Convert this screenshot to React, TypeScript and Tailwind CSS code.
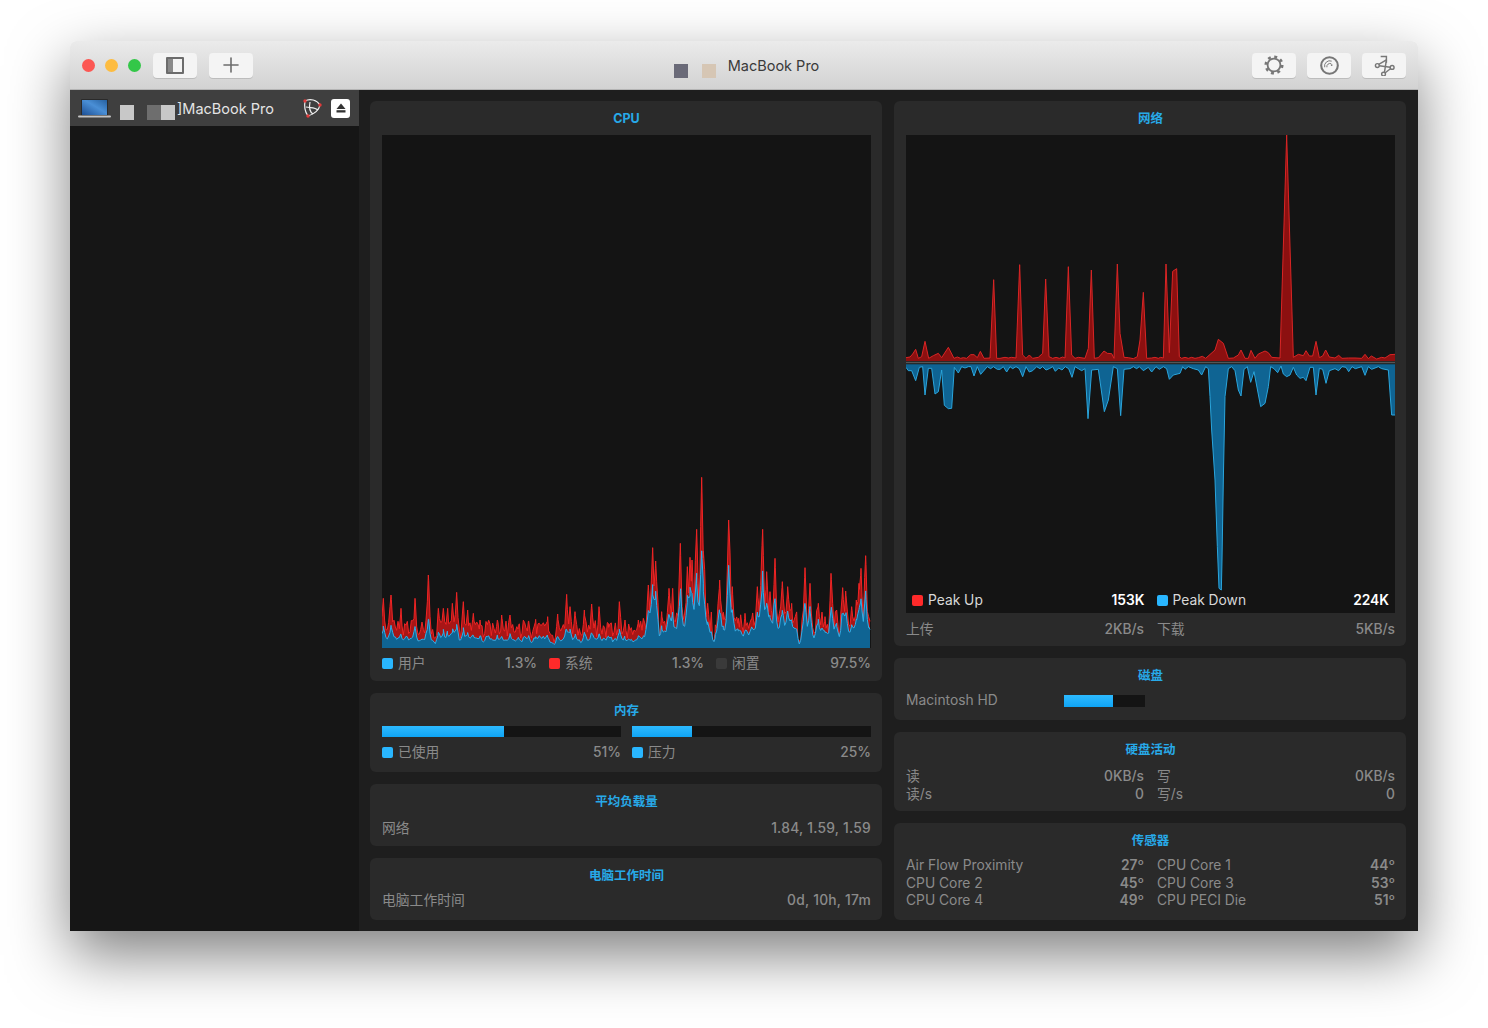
import type { ReactNode } from "react";
import { Plus } from "lucide-react";

const FONT = "font-['Inter','Noto_Sans_CJK_SC',sans-serif]";

// points below are taken from the reference, zoomed 3x
const netUp = [
  [18, 683], [30, 681], [38, 672], [47, 658], [55, 685], [65, 680], [75, 634], [86, 685], [100, 677], [115, 670],
  [125, 683], [145, 652], [162, 685], [172, 681], [182, 685], [190, 683], [200, 685], [212, 674], [222, 674], [232, 683],
  [241, 664], [252, 685], [270, 684], [281, 449], [290, 685], [300, 685], [315, 682], [325, 684], [335, 682], [348, 684],
  [359, 404], [368, 675], [378, 685], [388, 675], [398, 685], [415, 682], [428, 670], [437, 447], [447, 680], [458, 685],
  [468, 682], [478, 685], [488, 681], [495, 684], [505, 410], [515, 675], [525, 685], [535, 682], [555, 685], [565, 655],
  [574, 420], [583, 685], [595, 683], [612, 663], [622, 670], [635, 671], [642, 685], [652, 402], [660, 610], [672, 682],
  [685, 683], [700, 686], [712, 680], [720, 630], [730, 487], [740, 685], [755, 684], [765, 682], [775, 685], [782, 682],
  [790, 684], [798, 402], [808, 668], [818, 424], [830, 416], [838, 680], [845, 685], [855, 682], [865, 685], [875, 682],
  [885, 685], [895, 683], [907, 679], [917, 685], [945, 660], [955, 628], [970, 640], [985, 685], [1000, 684], [1015, 675],
  [1023, 660], [1035, 685], [1045, 685], [1053, 661], [1065, 685], [1075, 672], [1095, 663], [1105, 668], [1115, 682], [1140, 684],
  [1160, 15], [1180, 682], [1195, 673], [1210, 677], [1218, 662], [1228, 678], [1238, 678], [1248, 634], [1258, 683], [1268, 678],
  [1277, 660], [1288, 681], [1305, 684], [1316, 676], [1326, 685], [1345, 684], [1365, 684], [1385, 685], [1395, 673], [1405, 686],
  [1414, 678], [1430, 687], [1445, 682], [1455, 684], [1470, 674], [1485, 673],
];

const netDown = [
  [18, 712], [25, 722], [35, 722], [47, 752], [58, 712], [68, 710], [75, 795], [85, 715], [95, 715], [105, 792],
  [115, 785], [125, 720], [133, 826], [145, 836], [155, 835], [163, 712], [175, 729], [185, 710], [195, 714], [205, 710],
  [213, 710], [222, 738], [232, 710], [242, 733], [262, 710], [272, 716], [280, 710], [292, 718], [300, 718], [310, 710],
  [320, 726], [330, 710], [338, 716], [348, 710], [358, 716], [368, 740], [378, 710], [388, 726], [398, 722], [410, 710],
  [420, 716], [428, 710], [438, 720], [448, 716], [458, 710], [466, 724], [476, 714], [486, 720], [496, 710], [506, 716],
  [516, 742], [525, 710], [535, 716], [545, 722], [555, 716], [564, 866], [575, 720], [595, 718], [613, 845], [625, 810],
  [640, 710], [652, 716], [662, 857], [672, 718], [690, 716], [700, 710], [710, 716], [718, 710], [730, 722], [745, 712],
  [755, 726], [768, 710], [778, 718], [790, 710], [800, 716], [808, 748], [820, 735], [840, 730], [848, 710], [855, 718],
  [865, 710], [880, 716], [895, 720], [905, 735], [917, 710], [925, 716], [930, 800], [935, 900], [945, 1050], [952, 1250],
  [957, 1375], [964, 1380], [966, 1290], [970, 1050], [975, 800], [985, 716], [995, 710], [1005, 722], [1015, 780], [1023, 798],
  [1032, 718], [1042, 710], [1052, 757], [1062, 725], [1082, 830], [1095, 820], [1105, 770], [1112, 710], [1122, 716], [1133, 728],
  [1143, 708], [1150, 732], [1160, 740], [1170, 735], [1180, 712], [1190, 735], [1200, 745], [1210, 742], [1218, 752], [1230, 712],
  [1240, 712], [1248, 795], [1258, 715], [1268, 718], [1278, 760], [1288, 722], [1305, 716], [1316, 722], [1326, 710], [1338, 712],
  [1346, 725], [1356, 710], [1366, 716], [1385, 710], [1395, 736], [1405, 710], [1415, 718], [1435, 710], [1445, 716], [1465, 720],
  [1475, 855], [1485, 855],
];

const cpuPeaks = [
  [25, 415], [48, 405], [78, 445], [120, 415], [160, 345], [190, 445], [205, 445], [218, 445], [232, 430], [245, 397],
  [265, 425], [278, 450], [295, 460], [315, 480], [333, 485], [367, 480], [380, 465], [405, 465], [430, 497], [460, 485],
  [482, 478], [518, 470], [548, 462], [575, 403], [585, 440], [600, 455], [628, 450], [650, 432], [672, 440], [700, 490],
  [733, 425], [750, 480], [790, 480], [805, 475], [820, 375], [833, 263], [842, 303], [860, 455], [882, 385], [893, 385],
  [916, 250], [937, 320], [945, 292], [951, 300], [965, 208], [980, 52], [985, 293], [998, 430], [1020, 520], [1034, 360],
  [1045, 485], [1061, 180], [1072, 380], [1090, 475], [1110, 460], [1130, 490], [1147, 380], [1163, 208], [1175, 335], [1185, 395],
  [1200, 295], [1222, 365], [1238, 380], [1250, 430], [1272, 540], [1290, 323], [1305, 370], [1330, 430], [1350, 470], [1368, 340],
  [1385, 450], [1403, 383], [1412, 393], [1430, 440], [1444, 420], [1452, 370], [1458, 325], [1472, 287], [1481, 470],
];

const cpuDips = [540, 855, 1015, 1180, 1272, 1395];

function makeCpu() {
  let seed = 17;
  const rand = () => {
    seed = (seed * 16807) % 2147483647;
    return seed / 2147483647;
  };
  const xs: number[] = cpuPeaks.map((p) => p[0]);
  for (let x = 21; x <= 1487; x += 4) xs.push(x);
  xs.sort((a, b) => a - b);

  const red: number[][] = xs.map((x) => {
    const late = x > 810;
    let y = (late ? 450 : 480) + rand() * (late ? 70 : 55);
    if (cpuDips.some((d) => Math.abs(d - x) < 6)) y = 548;
    const spread = 0.7 + rand() * 0.7;
    for (const p of cpuPeaks) {
      const k = 5 + (565 - p[1]) / 14;
      y = Math.min(y, p[1] + Math.abs(p[0] - x) * k * spread);
    }
    return [x, y];
  });

  // the blue series follows the red one, a little smoothed
  const blue = red.map((p, i) => {
    const prev = red[Math.max(i - 1, 0)][1];
    const next = red[Math.min(i + 1, red.length - 1)][1];
    const smooth = (prev + p[1] * 2 + next) / 4;
    const ratio = (p[0] > 810 ? 0.58 : 0.38) + rand() * 0.14;
    return [p[0], 565 - (565 - smooth) * ratio];
  });
  return { red, blue };
}

const cpu = makeCpu();

function area(points: number[][], base: number) {
  const first = points[0];
  const last = points[points.length - 1];
  return `M${first[0]} ${base} ` + points.map((p) => `L${p[0]} ${p[1]}`).join(" ") + ` L${last[0]} ${base} Z`;
}

function line(points: number[][]) {
  return "M" + points.map((p) => `${p[0]} ${p[1]}`).join(" L");
}

function Card({ title, className, children }: { title: string; className?: string; children: ReactNode }) {
  return (
    <section className={`rounded-[6px] bg-[#2a2a2a] pl-3 pr-[11px] ${className ?? ""}`}>
      <h2 className="pt-[10px] text-center text-[12.5px] font-bold leading-[15px] text-[#27a9e8]">{title}</h2>
      {children}
    </section>
  );
}

function Pair({ label, value, bold, wide }: { label: string; value: string; bold?: boolean; wide?: boolean }) {
  return (
    <div className="flex items-center justify-between text-[13.8px] leading-[17.5px] text-[#8a8a8a]">
      <span>{label}</span>
      <span className={`${bold ? "font-semibold" : "font-medium"} ${wide ? "tracking-[0.25px]" : ""}`}>{value}</span>
    </div>
  );
}

function Legend({ color, label, value }: { color: string; label: string; value: string }) {
  return (
    <div className="flex items-center text-[13.8px] leading-[18px] text-[#8a8a8a]">
      <span className={`mr-[5px] h-[11px] w-[11px] rounded-[2px] ${color}`} />
      <span>{label}</span>
      <span className="ml-auto font-medium">{value}</span>
    </div>
  );
}

function Bar({ percent, className }: { percent: number; className?: string }) {
  return (
    <div className={`bg-[#141414] ${className ?? "h-[11px]"}`}>
      <div className="h-full bg-gradient-to-b from-[#2cbaff] to-[#0ea4f4]" style={{ width: `${percent}%` }} />
    </div>
  );
}

function ToolButton({ children }: { children: ReactNode }) {
  return (
    <button className="flex h-[25px] w-[44px] items-center justify-center rounded-[4px] bg-[#f4f4f4] shadow-[0_1px_0_rgba(0,0,0,0.12)]">
      {children}
    </button>
  );
}

function CpuChart() {
  return (
    <svg viewBox="21 -975 1467 1539" className="block h-[513px] w-[489px] bg-[#141414]">
      <path d={area(cpu.red, 565)} fill="#a81616" />
      <path d={line(cpu.red)} fill="none" stroke="#ee2424" strokeWidth="3" />
      <path d={area(cpu.blue, 565)} fill="#0f6493" />
      <path d={line(cpu.blue)} fill="none" stroke="#2db0ea" strokeWidth="3" />
    </svg>
  );
}

function NetChart() {
  return (
    <svg viewBox="18 15 1467 1434" className="block h-[478px] w-[489px]">
      <path d={area(netUp, 693)} fill="#8c1010" />
      <path d={line(netUp)} fill="none" stroke="#d92525" strokeWidth="3" />
      <rect x="18" y="695" width="1467" height="5" fill="#555555" />
      <path d={area(netDown, 703)} fill="#0f6493" />
      <path d={line(netDown)} fill="none" stroke="#2aa5dc" strokeWidth="3" />
    </svg>
  );
}

function Laptop() {
  return (
    <svg viewBox="0 0 33 20" className="h-[20px] w-[33px]">
      <defs>
        <linearGradient id="screen" x1="0" y1="1" x2="1" y2="0">
          <stop offset="0" stopColor="#1d4f94" />
          <stop offset="0.55" stopColor="#4a8fd6" />
          <stop offset="1" stopColor="#26609f" />
        </linearGradient>
      </defs>
      <rect x="3" y="1" width="27" height="17" rx="1" fill="#2a2a2a" />
      <rect x="4" y="2" width="25" height="15" fill="url(#screen)" />
      <rect x="0" y="17.5" width="33" height="2" rx="1" fill="#c4c4c4" />
    </svg>
  );
}

function KnotIcon() {
  return (
    <svg viewBox="0 0 20 20" className="h-[20px] w-[20px]" fill="none" stroke="#f0f0f0" strokeWidth="1.2">
      <path d="M3 3C8 0 15 2 18 7" />
      <path d="M3 3C2 9 3 14 6 18" />
      <path d="M18 7C17 12 12 16 6 18" />
      <path d="M8 4C7 9 8 14 11 16" />
      <path d="M4 9C9 10 13 9 16 12" />
      <circle cx="3" cy="3" r="1.7" fill="#e23b3b" stroke="none" />
      <circle cx="18" cy="7" r="1.7" fill="#e23b3b" stroke="none" />
      <circle cx="6" cy="18" r="1.7" fill="#e23b3b" stroke="none" />
    </svg>
  );
}

function EjectButton() {
  return (
    <div className="flex h-[19px] w-[19px] items-center justify-center rounded-[3px] bg-white">
      <svg viewBox="0 0 10 10" className="h-[10px] w-[10px]" fill="#333">
        <path d="M5 0.5 9.5 6H0.5Z" />
        <rect x="0.5" y="7.2" width="9" height="2.3" />
      </svg>
    </div>
  );
}

function GearIcon() {
  return (
    <svg viewBox="0 0 24 24" className="h-[22px] w-[22px]" fill="none" stroke="#777777">
      <circle cx="12" cy="12" r="7" strokeWidth="2" />
      <circle cx="12" cy="12" r="9" strokeWidth="2.8" strokeDasharray="3.2 3.87" />
    </svg>
  );
}

function SpiralIcon() {
  return (
    <svg viewBox="0 0 24 24" className="h-[21px] w-[21px]" fill="none" stroke="#777777">
      <circle cx="12" cy="12" r="9.5" strokeWidth="2.4" />
      <path d="M6.5 14a6 6 0 0 1 8-7" strokeWidth="1.1" />
      <path d="M9 14a3.6 3.6 0 0 1 5-4" strokeWidth="1.1" />
      <circle cx="14.5" cy="11.5" r="1" fill="#777777" stroke="none" />
    </svg>
  );
}

function RouteIcon() {
  return (
    <svg viewBox="0 0 22 22" className="h-[21px] w-[21px]" fill="none" stroke="#777777" strokeWidth="1.5">
      <circle cx="3.5" cy="11" r="2" />
      <circle cx="19" cy="13" r="2" />
      <circle cx="10" cy="20" r="2" />
      <path d="M5 9.8 13 5" />
      <path d="M7 1.5H13V8" />
      <path d="M5.5 11.3 17 12.8" />
      <path d="M11 18 13 5" />
      <path d="M11.5 18.8 17.5 14.2" />
    </svg>
  );
}

export default function App() {
  return (
    <div className={`h-[1028px] overflow-hidden bg-white px-[70px] pt-[41px] ${FONT}`}>
      <div className="flex h-[890px] w-[1348px] flex-col rounded-t-[6px] shadow-[0_24px_60px_rgba(0,0,0,0.5)]">
        {/* Title bar */}
        <header className="grid h-[49px] grid-cols-[1fr_auto_1fr] items-center rounded-t-[6px] border-b border-[#b4b4b4] bg-gradient-to-b from-[#ebebeb] to-[#d2d2d2] pl-[12px] pr-[12px]">
          <div className="flex items-center">
            <span className="h-[13px] w-[13px] rounded-full bg-[#fc5753]" />
            <span className="ml-[10px] h-[13px] w-[13px] rounded-full bg-[#fdbc40]" />
            <span className="ml-[10px] h-[13px] w-[13px] rounded-full bg-[#33c748]" />
            <div className="ml-[12px] flex gap-3">
              <ToolButton>
                <span className="flex h-[17px] w-[18px] rounded-[1px] border-2 border-[#6c6c6c]">
                  <span className="h-full w-[5px] bg-[#8a8a8a]" />
                </span>
              </ToolButton>
              <ToolButton>
                <Plus size={24} strokeWidth={1.6} color="#6c6c6c" />
              </ToolButton>
            </div>
          </div>
          <div className="ml-[5px] flex items-center text-[14.5px] text-[#3a3a3a]">
            <span className="mt-[12px] h-[14px] w-[14px] bg-[#6a6a78]" />
            <span className="ml-[14px] mt-[12px] h-[14px] w-[14px] bg-[#d6c6b4]" />
            <span className="ml-[12px] mt-[2px]">MacBook Pro</span>
          </div>
          <div className="flex justify-end gap-[11px]">
            <ToolButton>
              <GearIcon />
            </ToolButton>
            <ToolButton>
              <SpiralIcon />
            </ToolButton>
            <ToolButton>
              <RouteIcon />
            </ToolButton>
          </div>
        </header>

        <div className="flex min-h-0 flex-1">
          {/* Sidebar */}
          <aside className="w-[289px] bg-[#161616]">
            <div className="flex h-[36px] items-center bg-[#3f3f3f] pl-[8px] pr-[9px] text-[14.5px] text-[#e4e4e4]">
              <Laptop />
              <span className="ml-[9px] mt-[8px] h-[15px] w-[14px] bg-[#c8c8c8]" />
              <span className="ml-[13px] mt-[8px] h-[15px] w-[14px] bg-[#6e6e6e]" />
              <span className="mt-[8px] h-[15px] w-[14px] bg-[#c8c8c8]" />
              <span className="ml-[2px] mt-[2px]">]MacBook Pro</span>
              <div className="ml-auto flex items-center gap-[9px]">
                <KnotIcon />
                <EjectButton />
              </div>
            </div>
          </aside>

          {/* Panels */}
          <main className="flex flex-1 gap-3 bg-[#1e1e1e] p-[11px]">
            <div className="flex w-[512px] flex-col gap-3">
              <Card title="CPU" className="h-[580px]">
                <div className="mt-[9px]">
                  <CpuChart />
                </div>
                <div className="mt-[6px] grid grid-cols-3 gap-3">
                  <Legend color="bg-[#29b6ff]" label="用户" value="1.3%" />
                  <Legend color="bg-[#ff2a2a]" label="系统" value="1.3%" />
                  <Legend color="bg-[#3a3a3a]" label="闲置" value="97.5%" />
                </div>
              </Card>
              <Card title="内存" className="h-[79px]">
                <div className="mt-[8px] grid grid-cols-2 gap-[11px]">
                  <div>
                    <Bar percent={51} />
                    <div className="mt-[6px]">
                      <Legend color="bg-[#29b6ff]" label="已使用" value="51%" />
                    </div>
                  </div>
                  <div>
                    <Bar percent={25} />
                    <div className="mt-[6px]">
                      <Legend color="bg-[#29b6ff]" label="压力" value="25%" />
                    </div>
                  </div>
                </div>
              </Card>
              <Card title="平均负载量" className="h-[62px]">
                <div className="mt-[11px]">
                  <Pair label="网络" value="1.84, 1.59, 1.59" wide />
                </div>
              </Card>
              <Card title="电脑工作时间" className="h-[62px]">
                <div className="mt-[9px]">
                  <Pair label="电脑工作时间" value="0d, 10h, 17m" wide />
                </div>
              </Card>
            </div>

            <div className="flex w-[512px] flex-col gap-3">
              <Card title="网络" className="h-[545px]">
                <div className="relative mt-[9px] h-[478px] bg-[#141414]">
                  <NetChart />
                  <div className="absolute inset-x-[6px] bottom-[4px] grid grid-cols-2 gap-[12px] text-[13.8px] leading-[18px] text-[#d8d8d8]">
                    <div className="flex items-center">
                      <span className="mr-[5px] h-[11px] w-[11px] rounded-[2px] bg-[#ff2a2a]" />
                      <span>Peak Up</span>
                      <span className="ml-auto font-semibold text-white">153K</span>
                    </div>
                    <div className="flex items-center">
                      <span className="mr-[5px] h-[11px] w-[11px] rounded-[2px] bg-[#29b6ff]" />
                      <span>Peak Down</span>
                      <span className="ml-auto font-semibold text-white">224K</span>
                    </div>
                  </div>
                </div>
                <div className="mt-[8px] grid grid-cols-2 gap-[13px]">
                  <Pair label="上传" value="2KB/s" />
                  <Pair label="下载" value="5KB/s" />
                </div>
              </Card>
              <Card title="磁盘" className="h-[62px]">
                <div className="mt-[9px] flex items-center text-[13.8px] leading-[17.5px] text-[#8a8a8a]">
                  <span className="w-[158px]">Macintosh HD</span>
                  <div className="w-[81px]">
                    <Bar percent={60} className="h-[12px]" />
                  </div>
                </div>
              </Card>
              <Card title="硬盘活动" className="h-[79px]">
                <div className="mt-[11px] grid grid-cols-2 gap-x-[13px]">
                  <Pair label="读" value="0KB/s" />
                  <Pair label="写" value="0KB/s" />
                  <Pair label="读/s" value="0" />
                  <Pair label="写/s" value="0" />
                </div>
              </Card>
              <Card title="传感器" className="h-[97px]">
                <div className="mt-[9px] grid grid-cols-2 gap-x-[13px]">
                  <Pair label="Air Flow Proximity" value="27º" bold />
                  <Pair label="CPU Core 1" value="44º" bold />
                  <Pair label="CPU Core 2" value="45º" bold />
                  <Pair label="CPU Core 3" value="53º" bold />
                  <Pair label="CPU Core 4" value="49º" bold />
                  <Pair label="CPU PECI Die" value="51º" bold />
                </div>
              </Card>
            </div>
          </main>
        </div>
      </div>
    </div>
  );
}
